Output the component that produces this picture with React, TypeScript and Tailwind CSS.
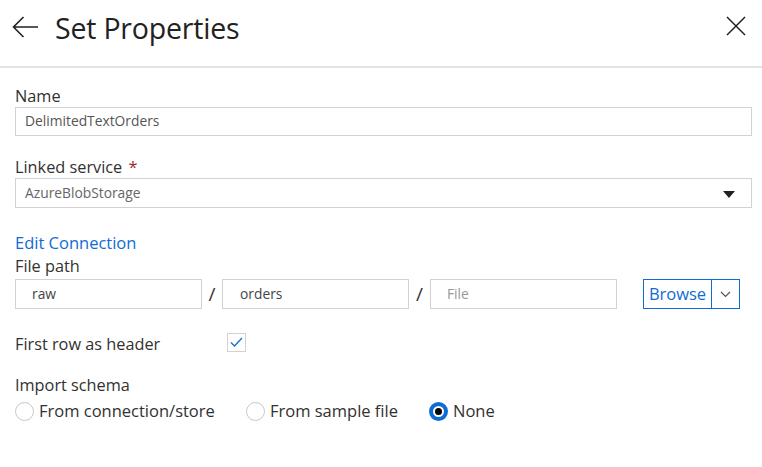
import React, { useState } from "react";

const font = { fontFamily: '"Open Sans", "Noto Sans", sans-serif' };

const App: React.FC = () => {
    const [schema, setSchema] = useState<string>("none");
    const [firstRow, setFirstRow] = useState<boolean>(true);

    const radios = [
        { id: "conn", label: "From connection/store", width: "w-[231px]" },
        { id: "sample", label: "From sample file", width: "w-[183px]" },
        { id: "none", label: "None", width: "" },
    ];

    return (
        <div className="w-[762px] h-[467px] bg-white text-[#323130]" style={font}>
            {/* Header */}
            <div className="h-[68px] flex items-center justify-between border-b-2 border-[#e3e3e3] pl-[12px] pr-[16px]">
                <div className="flex items-center">
                    <svg width="27" height="22" viewBox="0 0 27 22" className="mt-[-12px]">
                        <path d="M26 11H1.5M11.5 1L1.5 11l10 10" fill="none" stroke="#222" strokeWidth="1.6" />
                    </svg>
                    <h1 className="ml-[16px] text-[28.5px] leading-none mt-[-10px] text-[#222] tracking-[-0.2px]">Set Properties</h1>
                </div>
                <svg width="20" height="20" viewBox="0 0 20 20" className="mt-[-14px]">
                    <path d="M1 1l18 18M19 1L1 19" fill="none" stroke="#222" strokeWidth="1.5" />
                </svg>
            </div>

            <div className="px-[15px] pr-[10px]">
                {/* Name */}
                <div className="mt-[17px] text-[16.3px] leading-[22px]">Name</div>
                <div className="h-[29px] border border-[#d2d2d2] flex items-center px-[9px] text-[13.8px] text-[#555]">
                    DelimitedTextOrders
                </div>

                {/* Linked service */}
                <div className="mt-[20px] text-[16.3px] leading-[22px]">
                    Linked service <span className="text-[#a4262c] ml-[2px]">*</span>
                </div>
                <div className="h-[30px] border border-[#d2d2d2] flex items-center justify-between px-[9px] text-[13.8px] text-[#666]">
                    <span>AzureBlobStorage</span>
                    <svg width="12" height="8" viewBox="0 0 12 8" className="mr-[7px] mt-[3px]">
                        <path d="M0 0h12L6 7z" fill="#222" />
                    </svg>
                </div>

                {/* Edit connection + file path */}
                <div className="mt-[24px] text-[16.5px] leading-[22px] text-[#0f6cd4]">Edit Connection</div>
                <div className="text-[16.3px] leading-[22px] mt-[1px]">File path</div>
                <div className="flex items-center mt-[2px]">
                    <div className="w-[187px] h-[30px] border border-[#d2d2d2] flex items-center px-[16px] text-[13.8px] text-[#444]">raw</div>
                    <span className="w-[20px] text-center text-[19px] text-[#333]">/</span>
                    <div className="w-[187px] h-[30px] border border-[#d2d2d2] flex items-center px-[17px] text-[13.8px] text-[#444]">orders</div>
                    <span className="w-[21px] text-center text-[19px] text-[#333]">/</span>
                    <div className="w-[187px] h-[30px] border border-[#d2d2d2] flex items-center px-[16px] text-[13.8px] text-[#999]">File</div>
                    <div className="ml-[26px] flex h-[30px] border border-[#0f6cd4]">
                        <div className="w-[68px] flex items-center justify-center text-[16.5px] text-[#0f6cd4] border-r border-[#0f6cd4]">Browse</div>
                        <div className="w-[27px] flex items-center justify-center">
                            <svg width="11" height="7" viewBox="0 0 11 7">
                                <path d="M1 1l4.5 4.5L10 1" fill="none" stroke="#555" strokeWidth="1.2" />
                            </svg>
                        </div>
                    </div>
                </div>

                {/* First row as header */}
                <div className="flex items-center mt-[24px]">
                    <span className="w-[212px] text-[16.3px] leading-[22px]">First row as header</span>
                    <button
                        onClick={() => setFirstRow(!firstRow)}
                        className="w-[19px] h-[19px] border border-[#d2d2d2] flex items-center justify-center mt-[-4px]"
                    >
                        {firstRow && (
                            <svg width="13" height="10" viewBox="0 0 13 10">
                                <path d="M1 5.5l3.5 3.5L12 1" fill="none" stroke="#1a6fd8" strokeWidth="1.4" />
                            </svg>
                        )}
                    </button>
                </div>

                {/* Import schema */}
                <div className="mt-[19px] text-[16.3px] leading-[22px]">Import schema</div>
                <div className="flex items-center mt-[4px]">
                    {radios.map((r) => (
                        <div
                            key={r.id}
                            onClick={() => setSchema(r.id)}
                            className={`flex items-center cursor-pointer ${r.width}`}
                        >
                            {schema === r.id ? (
                                <span className="w-[19px] h-[19px] rounded-full border-[4px] border-[#0f6cd4] flex items-center justify-center">
                                    <span className="w-[7px] h-[7px] rounded-full bg-black" />
                                </span>
                            ) : (
                                <span className="w-[19px] h-[19px] rounded-full border border-[#c8c8c8]" />
                            )}
                            <span className="ml-[5px] text-[16.5px] leading-[22px]">{r.label}</span>
                        </div>
                    ))}
                </div>
            </div>
        </div>
    );
};

export default App;
